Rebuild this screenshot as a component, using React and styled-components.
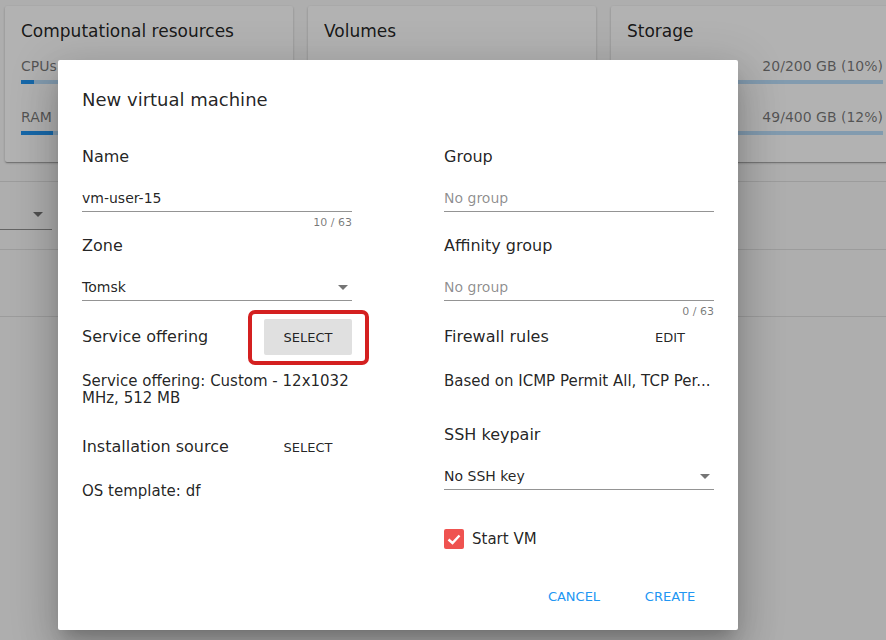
import React from 'react';
import styled, { createGlobalStyle } from 'styled-components';

const GlobalStyle = createGlobalStyle`
  html, body {
    margin: 0;
    padding: 0;
  }
  body {
    font-family: "DejaVu Sans", Verdana, sans-serif;
    background: #fafafa;
    color: rgba(0, 0, 0, 0.87);
  }
`;

const resources = [
  {
    title: 'Computational resources',
    stats: [
      { label: 'CPUs', value: '2/40 (5%)', percent: 5 },
      { label: 'RAM', value: '1/8 GB (12%)', percent: 12.5 }
    ]
  },
  {
    title: 'Volumes',
    stats: [
      { label: 'Volumes', value: '3/20 (15%)', percent: 15 },
      { label: 'Snapshots', value: '0/20 (0%)', percent: 0 }
    ]
  },
  {
    title: 'Storage',
    stats: [
      { label: 'Primary', value: '20/200 GB (10%)', percent: 10 },
      { label: 'Secondary', value: '49/400 GB (12%)', percent: 12 }
    ]
  }
];

function CheckIcon() {
  return (
    <svg width="20" height="20" viewBox="0 0 20 20">
      <polyline
        points="4.5,10.5 8.5,14 15.5,6.5"
        fill="none"
        stroke="#fff"
        strokeWidth="2.4"
      />
    </svg>
  );
}

function App() {
  return (
    <Page>
      <GlobalStyle />
      <Cards>
        {resources.map((card) => (
          <Card key={card.title}>
            <CardTitle>{card.title}</CardTitle>
            <Stats>
              {card.stats.map((stat) => (
                <div key={stat.label}>
                  <StatRow>
                    <span>{stat.label}</span>
                    <span>{stat.value}</span>
                  </StatRow>
                  <Bar>
                    <BarFill style={{ width: `${stat.percent}%` }} />
                  </Bar>
                </div>
              ))}
            </Stats>
          </Card>
        ))}
      </Cards>

      <Toolbar>
        <FilterSelect>
          <Arrow />
        </FilterSelect>
      </Toolbar>
      <HeaderRow />

      {/* затемнение + диалог */}
      <Backdrop>
        <Dialog>
          <DialogTitle>New virtual machine</DialogTitle>
          <Columns>
            <Column>
              <Field>
                <Label>Name</Label>
                <InputLine>vm-user-15</InputLine>
                <Hint>10 / 63</Hint>
              </Field>
              <Field>
                <Label>Zone</Label>
                <InputLine>
                  Tomsk
                  <Arrow />
                </InputLine>
                <Hint />
              </Field>
              <ActionRow>
                <Label>Service offering</Label>
                <Highlight>
                  <FlatButton $raised>SELECT</FlatButton>
                </Highlight>
              </ActionRow>
              <Description>
                Service offering: Custom - 12x1032 MHz, 512 MB
              </Description>
              <ActionRow $gap={22}>
                <Label>Installation source</Label>
                <FlatButton>SELECT</FlatButton>
              </ActionRow>
              <Description $gap={18}>OS template: df</Description>
            </Column>

            <Column>
              <Field>
                <Label>Group</Label>
                <InputLine $placeholder>No group</InputLine>
                <Hint />
              </Field>
              <Field>
                <Label>Affinity group</Label>
                <InputLine $placeholder>No group</InputLine>
                <Hint>0 / 63</Hint>
              </Field>
              <ActionRow>
                <Label>Firewall rules</Label>
                <FlatButton>EDIT</FlatButton>
              </ActionRow>
              <Description $nowrap>Based on ICMP Permit All, TCP Per...</Description>
              <Field $gap={35}>
                <Label>SSH keypair</Label>
                <InputLine>
                  No SSH key
                  <Arrow />
                </InputLine>
              </Field>
              <CheckRow>
                <CheckBox>
                  <CheckIcon />
                </CheckBox>
                Start VM
              </CheckRow>
            </Column>
          </Columns>
          <Actions>
            <FlatButton $primary>CANCEL</FlatButton>
            <FlatButton $primary>CREATE</FlatButton>
          </Actions>
        </Dialog>
      </Backdrop>
    </Page>
  );
}

export default App;

const Page = styled.div`
  position: relative;
  width: 886px;
  height: 640px;
  overflow: hidden;
  background: #fafafa;
`;

// верхние карточки ресурсов
const Cards = styled.div`
  display: grid;
  grid-template-columns: repeat(3, 288px);
  gap: 15px;
  padding: 6px 5px 0;
`;

const Card = styled.div`
  box-sizing: border-box;
  height: 156px;
  padding: 14px 16px;
  background: #fff;
  border-radius: 2px;
  box-shadow: 0 1px 3px rgba(0, 0, 0, 0.2), 0 1px 1px rgba(0, 0, 0, 0.14),
    0 2px 1px -1px rgba(0, 0, 0, 0.12);
`;

const CardTitle = styled.div`
  font-size: 17px;
  line-height: 22px;
  color: rgba(0, 0, 0, 0.87);
`;

const Stats = styled.div`
  display: flex;
  flex-direction: column;
  gap: 25px;
  margin-top: 16px;
`;

const StatRow = styled.div`
  display: flex;
  justify-content: space-between;
  font-size: 14px;
  line-height: 17px;
  color: rgba(0, 0, 0, 0.54);
`;

const Bar = styled.div`
  height: 4px;
  margin-top: 5px;
  background: #bbdefb;
`;

const BarFill = styled.div`
  height: 100%;
  background: #2196f3;
`;

// панель фильтров под карточками
const Toolbar = styled.div`
  margin-top: 19px;
  border-top: 1px solid #e0e0e0;
  border-bottom: 1px solid #e0e0e0;
  display: flex;
  align-items: flex-start;
  padding-top: 18px;
  height: 49px;
`;

const FilterSelect = styled.div`
  width: 52px;
  height: 30px;
  border-bottom: 1px solid rgba(0, 0, 0, 0.42);
  display: flex;
  align-items: center;
  justify-content: flex-end;
  padding-right: 5px;
  box-sizing: border-box;
`;

const HeaderRow = styled.div`
  height: 66px;
  border-bottom: 1px solid #e0e0e0;
`;

const Arrow = styled.span`
  width: 0;
  height: 0;
  margin-left: auto;
  margin-right: 4px;
  border-left: 5px solid transparent;
  border-right: 5px solid transparent;
  border-top: 5px solid rgba(0, 0, 0, 0.54);
`;

const Backdrop = styled.div`
  position: absolute;
  inset: 0;
  background: rgba(0, 0, 0, 0.3);
  padding: 60px 0 0 58px;
  box-sizing: border-box;
`;

const Dialog = styled.div`
  box-sizing: border-box;
  width: 680px;
  height: 570px;
  padding: 28px 24px 16px;
  background: #fff;
  border-radius: 2px;
  display: flex;
  flex-direction: column;
  box-shadow: 0 11px 15px -7px rgba(0, 0, 0, 0.2),
    0 24px 38px 3px rgba(0, 0, 0, 0.14), 0 9px 46px 8px rgba(0, 0, 0, 0.12);
`;

const DialogTitle = styled.h2`
  margin: 0;
  font-size: 18px;
  line-height: 24px;
  font-weight: normal;
  color: rgba(0, 0, 0, 0.87);
`;

const Columns = styled.div`
  display: grid;
  grid-template-columns: 270px 270px;
  column-gap: 92px;
  margin-top: 35px;
`;

const Column = styled.div`
  display: flex;
  flex-direction: column;
`;

const Field = styled.div`
  display: flex;
  flex-direction: column;
  margin-top: ${(p) => (p.$gap ? `${p.$gap}px` : '0')};
  & + & {
    margin-top: 6px;
  }
`;

const Label = styled.div`
  font-size: 16px;
  line-height: 20px;
  color: rgba(0, 0, 0, 0.87);
`;

const InputLine = styled.div`
  margin-top: 21px;
  height: 20px;
  padding-bottom: 3px;
  display: flex;
  align-items: center;
  font-size: 14px;
  line-height: 20px;
  border-bottom: 1px solid rgba(0, 0, 0, 0.42);
  color: ${(p) => (p.$placeholder ? 'rgba(0, 0, 0, 0.45)' : 'rgba(0, 0, 0, 0.87)')};
`;

const Hint = styled.div`
  margin-top: 4px;
  height: 14px;
  font-size: 11px;
  line-height: 14px;
  text-align: right;
  color: rgba(0, 0, 0, 0.54);
`;

const ActionRow = styled.div`
  display: flex;
  align-items: center;
  justify-content: space-between;
  height: 36px;
  margin-top: ${(p) => (p.$gap ? `${p.$gap}px` : '0')};
`;

// красная рамка-выделение вокруг кнопки
const Highlight = styled.div`
  position: relative;
  display: flex;
  &::after {
    content: '';
    position: absolute;
    top: -9px;
    left: -16px;
    right: -17px;
    bottom: -10px;
    border: 4px solid #d42020;
    border-radius: 7px;
    pointer-events: none;
  }
`;

const FlatButton = styled.button`
  min-width: 88px;
  height: 36px;
  padding: 0 16px;
  border: none;
  border-radius: 2px;
  font-family: inherit;
  font-size: 13px;
  cursor: pointer;
  background: ${(p) => (p.$raised ? '#e0e0e0' : 'transparent')};
  color: ${(p) => (p.$primary ? '#2196f3' : 'rgba(0, 0, 0, 0.87)')};
`;

const Description = styled.div`
  margin-top: ${(p) => (p.$gap ? `${p.$gap}px` : '18px')};
  font-size: 15px;
  line-height: 17px;
  color: rgba(0, 0, 0, 0.87);
  white-space: ${(p) => (p.$nowrap ? 'nowrap' : 'normal')};
  overflow: hidden;
`;

const CheckRow = styled.label`
  display: flex;
  align-items: center;
  gap: 8px;
  margin-top: 39px;
  font-size: 15px;
  line-height: 20px;
  color: rgba(0, 0, 0, 0.87);
`;

const CheckBox = styled.span`
  width: 20px;
  height: 20px;
  border-radius: 2px;
  background: #ef5350;
  display: flex;
`;

const Actions = styled.div`
  margin-top: auto;
  display: flex;
  justify-content: flex-end;
  gap: 8px;
`;
